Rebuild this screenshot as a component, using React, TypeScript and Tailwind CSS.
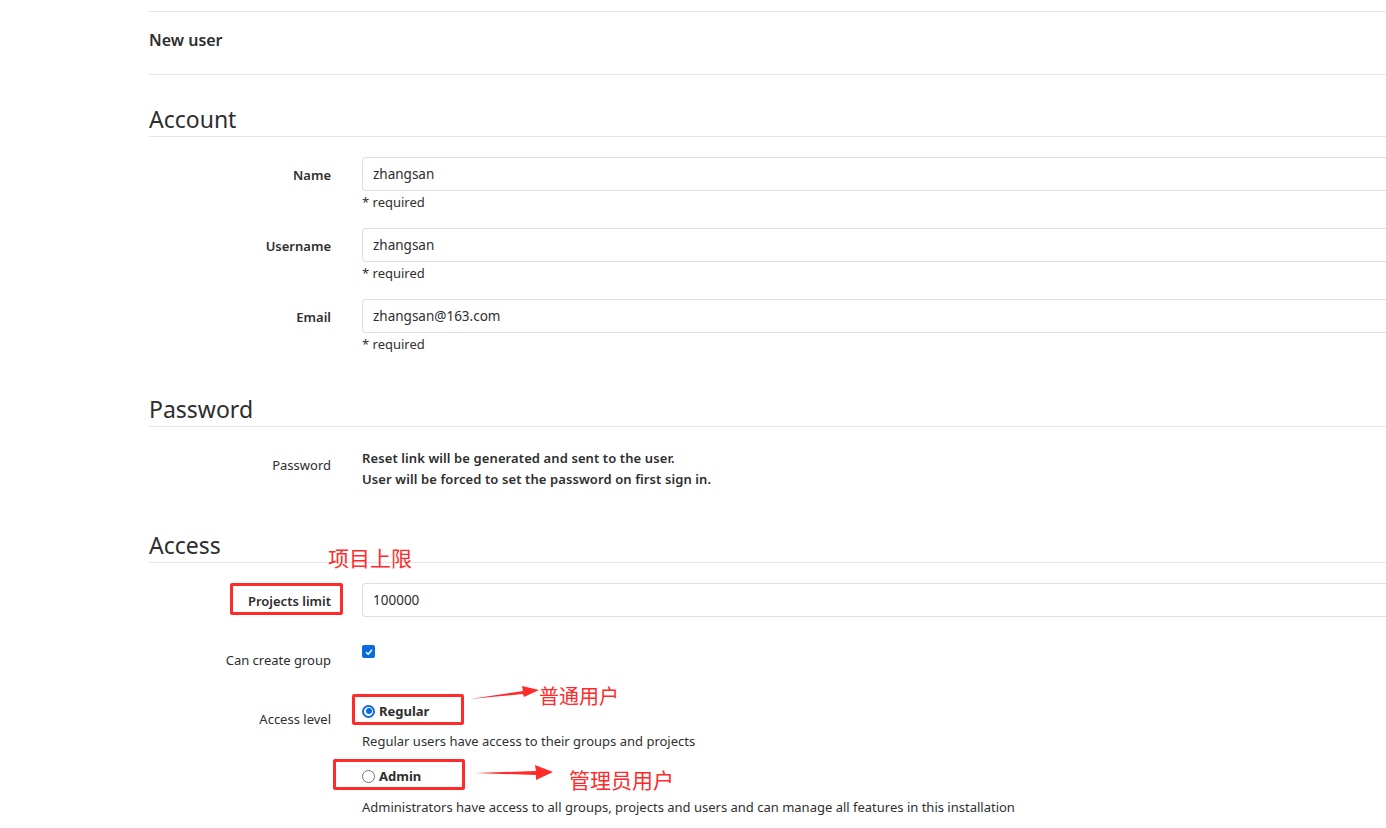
import React from "react";

const font = { fontFamily: '"Noto Sans", "Open Sans", "Noto Sans CJK SC", sans-serif' };

function Field({ label, value }: { label: string; value: string }) {
  return (
    <div className="flex">
      <label className="w-[213px] shrink-0 pr-[31px] pt-[9px] text-right text-[13px] leading-[18px] font-semibold text-[#2e2e2e]">
        {label}
      </label>
      <div className="flex-1">
        <div className="h-[34px] border border-r-0 border-[#dfdfdf] rounded-l-[4px] px-[10px] flex items-center text-[13.5px] text-[#2e2e2e]">
          {value}
        </div>
        <p className="mt-[2px] text-[13px] leading-[18px] text-[#303030]">* required</p>
      </div>
    </div>
  );
}

function Heading({ children }: { children: React.ReactNode }) {
  return (
    <h3 className="text-[23px] leading-[28px] text-[#2e2e2e] pb-[3px] border-b border-[#e5e5e5]">{children}</h3>
  );
}

export default function App() {
  return (
    <div className="relative min-h-[828px] bg-white overflow-hidden" style={font}>
      <div className="pl-[149px] pt-[11px]">
        <div className="border-t border-[#e5e5e5] h-[64px] pt-[17px] border-b">
          <span className="block text-[16px] leading-[22px] font-semibold text-[#2e2e2e]">New user</span>
        </div>

        <div className="mt-[30px]">
          <Heading>Account</Heading>
          <div className="mt-[20px] flex flex-col gap-[17px]">
            <Field label="Name" value="zhangsan" />
            <Field label="Username" value="zhangsan" />
            <Field label="Email" value="zhangsan@163.com" />
          </div>
        </div>

        <div className="mt-[42px]">
          <Heading>Password</Heading>
          <div className="mt-[21px] flex">
            <label className="w-[213px] shrink-0 pr-[31px] pt-[8px] text-right text-[13px] leading-[18px] text-[#2e2e2e]">Password</label>
            <div className="text-[13px] font-semibold text-[#2e2e2e] leading-[21px] tracking-[0.1px]">
              <p>Reset link will be generated and sent to the user.</p>
              <p>User will be forced to set the password on first sign in.</p>
            </div>
          </div>
        </div>

        <div className="mt-[41px]">
          <Heading>Access</Heading>
          <div className="mt-[20px] flex">
            <label className="w-[213px] shrink-0 pr-[31px] pt-[9px] text-right text-[13px] leading-[18px] font-semibold text-[#2e2e2e]">Projects limit</label>
            <div className="flex-1 h-[34px] border border-r-0 border-[#dfdfdf] rounded-l-[4px] px-[10px] flex items-center text-[13.5px] text-[#2e2e2e]">
              100000
            </div>
          </div>

          <div className="mt-[28px] flex">
            <label className="w-[213px] shrink-0 pr-[31px] pt-[6px] text-right text-[13px] leading-[18px] text-[#2e2e2e]">Can create group</label>
            <div className="w-[13px] h-[13px] rounded-[2px] bg-[#0b6bdc] flex items-center justify-center">
              <svg viewBox="0 0 12 12" className="w-[10px] h-[10px]">
                <path d="M2.5 6.3 L5 8.6 L9.6 3.4" fill="none" stroke="white" strokeWidth="1.8" />
              </svg>
            </div>
          </div>

          <div className="mt-[31px] flex">
            <label className="w-[213px] shrink-0 pr-[31px] pt-[10px] text-right text-[13px] leading-[18px] text-[#2e2e2e]">Access level</label>
            <div className="flex-1">
              <div className="flex items-center gap-[4px] h-[22px]">
                <span className="w-[13px] h-[13px] rounded-full border-2 border-[#0b6bdc] bg-white flex items-center justify-center">
                  <span className="w-[6px] h-[6px] rounded-full bg-[#0b6bdc]" />
                </span>
                <span className="text-[13px] leading-[18px] font-bold text-[#2e2e2e]">Regular</span>
              </div>
              <p className="mt-[10px] text-[13px] leading-[18px] text-[#303030]">Regular users have access to their groups and projects</p>
              <div className="flex items-center gap-[4px] h-[22px] mt-[15px]">
                <span className="w-[13px] h-[13px] rounded-full border border-[#767676] bg-white" />
                <span className="text-[13px] leading-[18px] font-bold text-[#2e2e2e]">Admin</span>
              </div>
              <p className="mt-[11px] text-[13px] leading-[18px] text-[#303030]">
                Administrators have access to all groups, projects and users and can manage all features in this installation
              </p>
            </div>
          </div>
        </div>
      </div>

      {/* red annotations */}
      <span className="absolute left-[328px] top-[544px] text-[21px] leading-[28px] text-[#ff2a2a]">项目上限</span>
      <div className="absolute left-[230px] top-[583px] w-[113px] h-[32px] border-[3px] border-[#ff2a2a] rounded-[2px]" />
      <div className="absolute left-[352px] top-[694px] w-[112px] h-[31px] border-[3px] border-[#ff2a2a] rounded-[2px]" />
      <div className="absolute left-[333px] top-[759px] w-[132px] h-[31px] border-[3px] border-[#ff2a2a] rounded-[2px]" />
      <svg className="absolute left-0 top-0 pointer-events-none" width="1386" height="828">
        <polygon points="470,699 523,691 522,686 539,690 524,697 523,694" fill="#ff2a2a" />
        <polygon points="475,773 536,771 535,765 553,772 536,780 536,775" fill="#ff2a2a" />
      </svg>
      <span className="absolute left-[539px] top-[684px] text-[20px] leading-[26px] text-[#ff2a2a]">普通用户</span>
      <span className="absolute left-[569px] top-[767px] text-[21px] leading-[26px] text-[#ff2a2a]">管理员用户</span>
    </div>
  );
}
